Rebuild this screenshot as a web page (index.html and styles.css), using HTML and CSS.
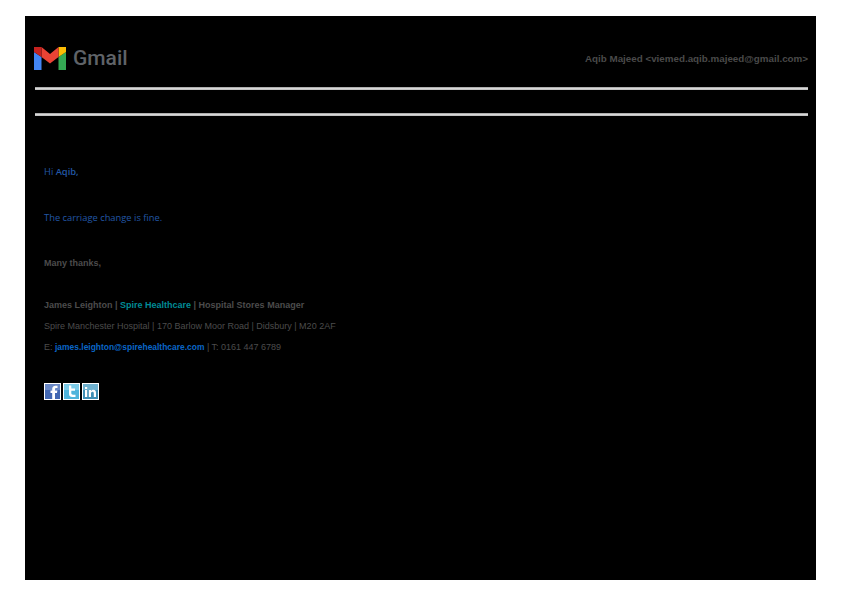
FILE: index.html
```html
<!DOCTYPE html>
<html lang="en">
<head>
<meta charset="utf-8">
<title>Gmail</title>
<link rel="stylesheet" href="styles.css">
</head>
<body>
<main class="sheet">
  <header class="head">
    <div class="brand">
      <svg class="m-logo" viewBox="0 0 32 24" width="32" height="24" aria-hidden="true">
        <path d="M0 6V24H7.500V11Z" fill="#4285f4"/>
        <path d="M24.500 24H32V6L24.500 11Z" fill="#34a853"/>
        <path d="M24.500 1V11L32 6V1Z" fill="#fbbc04"/>
        <path d="M7.500 11V1L16 8 24.500 1V11L16 17.500Z" fill="#ea4335"/>
        <path d="M0 1V6L7.500 11V1Z" fill="#c5221f"/>
      </svg>
      <span class="wordmark">Gmail</span>
    </div>
    <div class="account">Aqib Majeed &lt;viemed.aqib.majeed@gmail.com&gt;</div>
  </header>
  <div class="rules">
    <hr class="rule">
    <hr class="rule">
  </div>
  <section class="message">
    <p class="blue first">Hi <span class="heavy">Aqib,</span></p>
    <p class="blue second">The carriage change is fine.</p>
    <p class="sign thanks">Many thanks,</p>
    <p class="sign name">James Leighton | <span class="teal">Spire Healthcare</span> | Hospital Stores Manager</p>
    <p class="sig line">Spire Manchester Hospital | 170 Barlow Moor Road | Didsbury | M20 2AF</p>
    <p class="sig line">E: <b class="link">james.leighton@spirehealthcare.com</b> | T: 0161 447 6789</p>
    <div class="social">
      <svg class="icon" viewBox="0 0 17 17" aria-hidden="true"><rect width="17" height="17" fill="#fff"/><rect x="1" y="1" width="15" height="15" fill="#4267b2"/><rect x="1" y="1" width="15" height="6" fill="#6a88c6"/><path d="M11 16V10H13L13.400 7.500H11V6.200C11 5.400 11.400 5 12.200 5H13.500V2.700H11.500C9.300 2.700 8.200 4 8.200 6V7.500H6.500V10H8.200V16Z" fill="#fff"/></svg>
      <svg class="icon" viewBox="0 0 17 17" aria-hidden="true"><rect width="17" height="17" fill="#fff"/><rect x="1" y="1" width="15" height="15" fill="#4fb4dc"/><rect x="1" y="1" width="15" height="6" fill="#7ccbe8"/><path d="M6 2.500H8.300V5.500H12V7.800H8.300V10C8.300 11.200 9 11.700 10 11.700H12.500V14H9.300C7.200 14 6 12.800 6 10.700Z" fill="#fff"/></svg>
      <svg class="icon" viewBox="0 0 17 17" aria-hidden="true"><rect width="17" height="17" fill="#fff"/><rect x="1" y="1" width="15" height="15" fill="#3f8fb5"/><rect x="1" y="1" width="15" height="6" fill="#6fb2d0"/><path d="M3 7H5.200V14H3ZM3 4H5.200V6H3ZM6.800 7H9V8C9.500 7.200 10.300 6.800 11.300 6.800 13.200 6.800 14 8 14 10V14H11.800V10.500C11.800 9.400 11.400 8.800 10.500 8.800 9.500 8.800 9 9.500 9 10.500V14H6.800Z" fill="#fff"/></svg>
    </div>
  </section>
</main>
</body>
</html>
```
FILE: styles.css
```css
* { box-sizing: border-box; }
html, body { margin: 0; padding: 0; background: #fff; }
body { width: 842px; height: 595px; padding: 16px 26px 15px 25px; }
.sheet { height: 564px; background: #000; padding: 30px 8px 0 9px; font-family: "Liberation Sans", Arial, sans-serif; }
.head { display: flex; justify-content: space-between; align-items: center; height: 24px; }
.brand { display: flex; align-items: center; gap: 7px; }
.m-logo { display: block; }
.wordmark { font-family: Roboto, sans-serif; font-size: 21px; line-height: 24px; color: #5f6368; font-weight: 500; }
.account { font-size: 9.800px; font-weight: 700; color: #4a4a4a; white-space: nowrap; }
.rules { margin: 17px 0 0 1px; display: flex; flex-direction: column; gap: 23px; }
.rule { margin: 0; border: 0; height: 3px; background: linear-gradient(#999, #e4e4e4 60%, #aaa); }
.message { padding: 50px 0 0 10px; }
.message p { margin: 0; white-space: nowrap; }
.blue { font-family: "Open Sans", sans-serif; font-size: 9.350px; line-height: 12px; color: #2257a5; }
.heavy { font-weight: 600; }
.second { margin-top: 34px !important; }
.sign, .sig { font-size: 9px; line-height: 12px; color: #4c4c4c; }
.sign { font-weight: 700; }
.thanks { margin-top: 33px !important; }
.name { margin-top: 30px !important; }
.line { margin-top: 9px !important; }
.teal { color: #008c95; }
.link { color: #0a66c8; font-size: 8.450px; }
.social { display: flex; gap: 2px; margin-top: 30px; }
.icon { display: block; width: 17px; height: 17px; }
```
